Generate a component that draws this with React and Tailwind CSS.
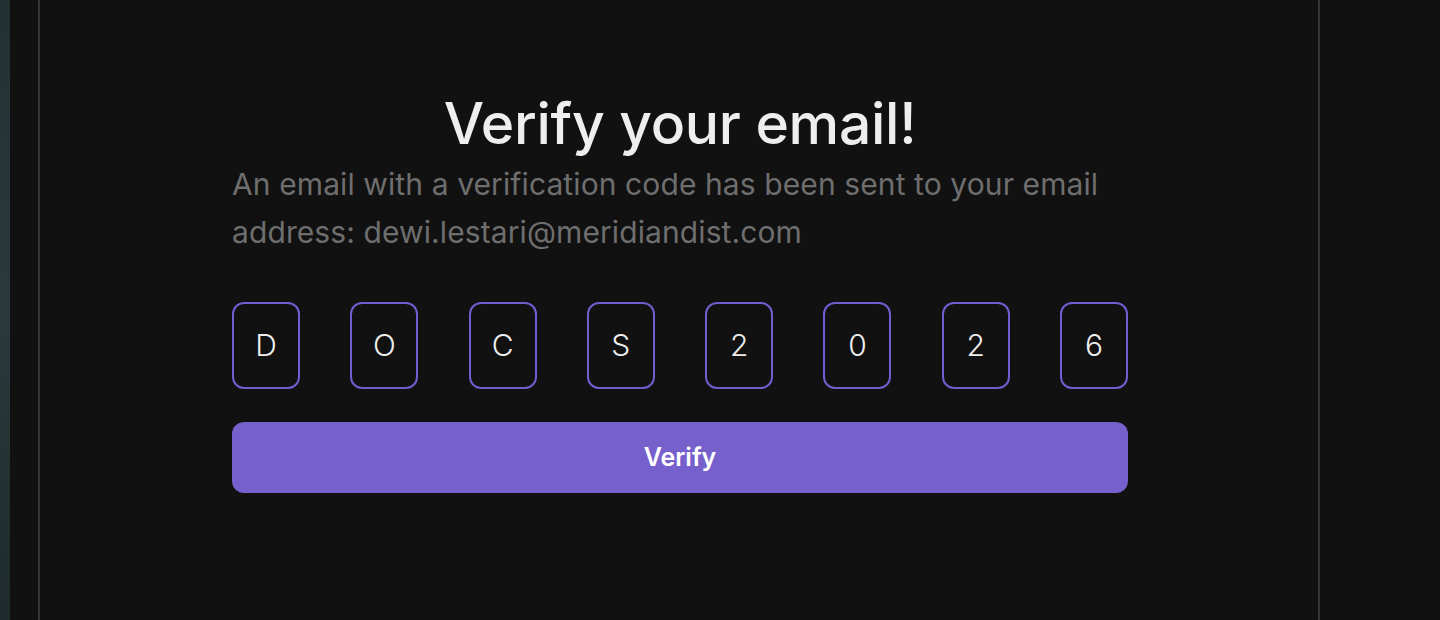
export default function App() {
  const code = ['D', 'O', 'C', 'S', '2', '0', '2', '6'];

  return (
    <div className="flex h-[620px] w-full overflow-hidden bg-[#111111] font-['Inter',sans-serif]">
      {/* left edge strip */}
      <div className="w-[10px] shrink-0 bg-gradient-to-b from-[#223032] via-[#2a3a3c] to-[#1e2a2b]"></div>

      <div className="w-[28px] shrink-0"></div>

      {/* main panel */}
      <main className="flex w-[1282px] shrink-0 justify-center border-x-2 border-[#363636]">
        <div className="ml-[2px] w-[896px] pt-[88px]">
          <h1 className="text-center text-[57px] font-medium leading-[72px] tracking-[-0.3px] text-[#eeeeee]">
            Verify your email!
          </h1>
          <p className="text-[30px] leading-[48px] tracking-[0.1px] text-[#6e6e6e]">
            An email with a verification code has been sent to your email address: dewi.lestari@meridiandist.com
          </p>

          <div className="mt-[46px] flex justify-between">
            {code.map((c, i) => (
              <div
                key={i}
                className="flex h-[87px] w-[68px] items-center justify-center rounded-[12px] border-2 border-[#6f5ecf] text-[30px] font-light text-[#eeeeee]"
              >
                {c}
              </div>
            ))}
          </div>

          <button className="mt-[33px] flex h-[71px] w-full items-center justify-center rounded-[12px] bg-[#7661cc] text-[25px] font-semibold text-white">
            Verify
          </button>
        </div>
      </main>
    </div>
  );
}
